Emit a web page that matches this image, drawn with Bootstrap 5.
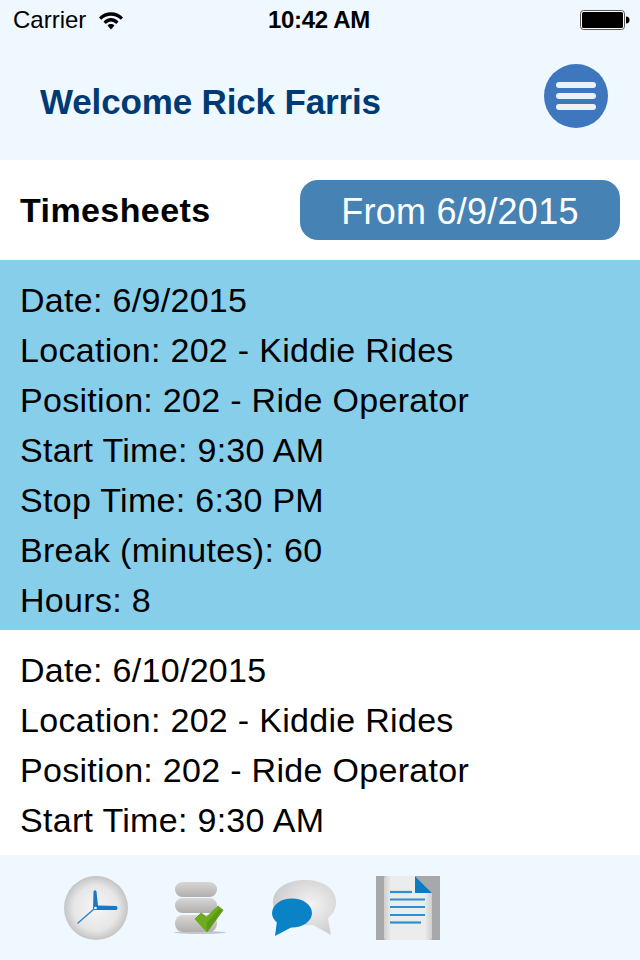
<!DOCTYPE html>
<html lang="en">
<head>
<meta charset="utf-8">
<title>Timesheets</title>
<link href="https://cdn.jsdelivr.net/npm/bootstrap@5.3.0/dist/css/bootstrap.min.css" rel="stylesheet">
<style>
html,body{margin:0;height:960px;overflow:hidden;background:#fff;}
body{font-family:"Liberation Sans",Arial,sans-serif;color:#000;}
.app-shell{height:960px;width:640px;overflow:hidden;}
.status-strip{height:40px;background:#eff7ff;padding:0 10px 0 13px;font-size:24px;line-height:40px;position:relative;}
.status-time{font-weight:700;position:absolute;left:0;right:0;text-align:center;font-size:24px;top:0;letter-spacing:-.3px;margin-left:-2px;}
.head-strip{height:120px;background:#eff7ff;padding:0 32px 8px 40px;}
.head-title{font-size:35px;font-weight:700;color:#003a75;margin:0;line-height:1;position:relative;top:5px;letter-spacing:-.15px;}
.title-row{height:100px;padding:0 20px;background:#fff;}
.title-text{font-size:34px;font-weight:700;margin:0;line-height:1;letter-spacing:.4px;}
.from-btn{width:320px;height:60px;background:#4682b4;border:0;border-radius:18px;color:#fff;font-size:36px;padding:3px 0 0;line-height:57px;letter-spacing:.25px;}
.sheet-list{flex:1 1 0;min-height:0;overflow:hidden;}
.sheet-item{padding:15px 20px 5px;font-size:34px;letter-spacing:.3px;line-height:50px;background:#fff;}
.sheet-item.picked{background:#87ceeb;}
.foot-strip{height:105px;background:#eff7ff;padding:21px 0 0 64px;gap:44px;flex:0 0 105px;}
.foot-strip svg{display:block;flex:none;filter:blur(.4px);}
.foot-strip .pull-doc{margin-left:-4px;}
</style>
</head>
<body>
<div class="app-shell d-flex flex-column">
  <div class="status-strip d-flex align-items-center justify-content-between flex-shrink-0">
    <div class="d-flex align-items-center gap-2">
      <span>Carrier</span>
      <svg class="ms-1" width="26" height="20" viewBox="0 0 26 20" aria-hidden="true"><path d="M1 7.500C7 .5 19 .5 25 7.500l-2.200 2.300C17.500 4.300 8.500 4.300 3.200 9.800Z" fill="#000"/><path d="M5.500 11.800C9.500 6.800 16.500 6.800 20.500 11.800l-2.300 2.300C15 10.700 11 10.700 7.800 14.100Z" fill="#000"/><path d="M9.500 15.500c2-1.900 5-1.900 7 0L13 19.500Z" fill="#000"/></svg>
    </div>
    <span class="status-time">10:42 AM</span>
    <svg width="50" height="20" viewBox="0 0 50 20" aria-hidden="true"><rect x=".5" y=".5" width="44" height="19" rx="3" fill="#fff" stroke="#555" stroke-width="1"/><rect x="2" y="2" width="41" height="16" rx="1.500" fill="#000"/><path d="M46 6.500c2.500 0 3.500 1.500 3.500 3.500s-1 3.500-3.500 3.500Z" fill="#000"/></svg>
  </div>

  <div class="head-strip d-flex align-items-center justify-content-between flex-shrink-0">
    <h1 class="head-title">Welcome Rick Farris</h1>
    <svg width="64" height="64" viewBox="0 0 64 64" aria-hidden="true">
      <circle cx="32" cy="32" r="32" fill="#3f77be"/>
      <rect x="12" y="18" width="40" height="6" rx="3" fill="#eaf1fa"/>
      <rect x="12" y="29" width="40" height="6" rx="3" fill="#eaf1fa"/>
      <rect x="12" y="40" width="40" height="6" rx="3" fill="#eaf1fa"/>
    </svg>
  </div>

  <div class="title-row d-flex align-items-center justify-content-between flex-shrink-0">
    <h2 class="title-text">Timesheets</h2>
    <button type="button" class="btn from-btn">From 6/9/2015</button>
  </div>

  <div class="sheet-list">
    <div class="sheet-item picked">
      <div>Date: 6/9/2015</div>
      <div>Location: 202 - Kiddie Rides</div>
      <div>Position: 202 - Ride Operator</div>
      <div>Start Time: 9:30 AM</div>
      <div>Stop Time: 6:30 PM</div>
      <div>Break (minutes): 60</div>
      <div>Hours: 8</div>
    </div>
    <div class="sheet-item">
      <div>Date: 6/10/2015</div>
      <div>Location: 202 - Kiddie Rides</div>
      <div>Position: 202 - Ride Operator</div>
      <div>Start Time: 9:30 AM</div>
    </div>
  </div>

  <div class="foot-strip d-flex align-items-start">
    <svg width="64" height="64" viewBox="0 0 64 64" aria-hidden="true">
      <defs><radialGradient id="clk" cx=".5" cy=".5" r=".5"><stop offset="0" stop-color="#f6f6f6"/><stop offset=".7" stop-color="#e6e6e6"/><stop offset="1" stop-color="#c4c4c4"/></radialGradient></defs>
      <circle cx="32" cy="32" r="32" fill="url(#clk)"/>
      <path d="M29 34L29.500 15.500Q31 13 32.500 15.500L34 29.500L52.500 30Q54.500 32 52.500 34Z" fill="#1878c4"/>
      <path d="M30 33L14 47" stroke="#2a8ad4" stroke-width="1.500" stroke-linecap="round"/>
      <circle cx="31.500" cy="32" r="1.300" fill="#fff"/>
    </svg>
    <svg width="56" height="64" viewBox="0 0 56 64" aria-hidden="true">
      <defs><linearGradient id="dsk" x1="0" y1="0" x2="0" y2="1"><stop offset="0" stop-color="#d8d7d5"/><stop offset="1" stop-color="#b0afad"/></linearGradient></defs>
      <ellipse cx="28" cy="56.500" rx="26" ry="1.500" fill="#c4c8cc"/>
      <rect x="3" y="6" width="42" height="15" rx="7.500" fill="url(#dsk)"/>
      <rect x="3" y="22" width="42" height="15" rx="7.500" fill="url(#dsk)"/>
      <rect x="3" y="39" width="42" height="17" rx="8" fill="url(#dsk)"/>
      <path d="M23 43L29 37L34.500 41L46 30L51 34L35 56Z" fill="#6eac1e" stroke="#6eac1e" stroke-width="1" stroke-linejoin="round"/>
      <path d="M35 56L34.500 47L47 33L51 34Z" fill="#4f8a12" opacity=".55"/>
    </svg>
    <svg width="64" height="64" viewBox="0 0 64 64" aria-hidden="true">
      <defs><radialGradient id="bub" cx=".6" cy=".45" r=".6"><stop offset="0" stop-color="#f4f4f4"/><stop offset="1" stop-color="#cdcdcd"/></radialGradient></defs>
      <path d="M1 26C1 12 16 4 33 4c17 0 31 8 31 22 0 8-4 13-8 16l3 17-18-10C22 51 1 44 1 26Z" fill="url(#bub)"/>
      <ellipse cx="20" cy="37" rx="20" ry="14.500" fill="#0a82c6"/>
      <path d="M5 45L3 60L20 51Z" fill="#0a82c6"/>
    </svg>
    <svg class="pull-doc" width="64" height="64" viewBox="0 0 64 64" aria-hidden="true">
      <defs><linearGradient id="pg" x1="0" y1="0" x2="1" y2="0"><stop offset="0" stop-color="#cfcfcf"/><stop offset=".15" stop-color="#ececec"/><stop offset=".85" stop-color="#ececec"/><stop offset="1" stop-color="#cfcfcf"/></linearGradient></defs>
      <rect width="64" height="64" fill="#a8a8a8"/>
      <path d="M8 2Q8 0 10 0H39L56 17V62Q56 64 54 64H10Q8 64 8 62Z" fill="url(#pg)"/>
      <path d="M39 0L56 17H39Z" fill="#0a7cc0"/>
      <g stroke="#2a90d0" stroke-width="2.200"><path d="M14 16H36"/><path d="M14 23.500H49"/><path d="M14 31H49"/><path d="M14 39H49"/><path d="M14 46.500H45"/></g>
    </svg>
  </div>
</div>
</body>
</html>
